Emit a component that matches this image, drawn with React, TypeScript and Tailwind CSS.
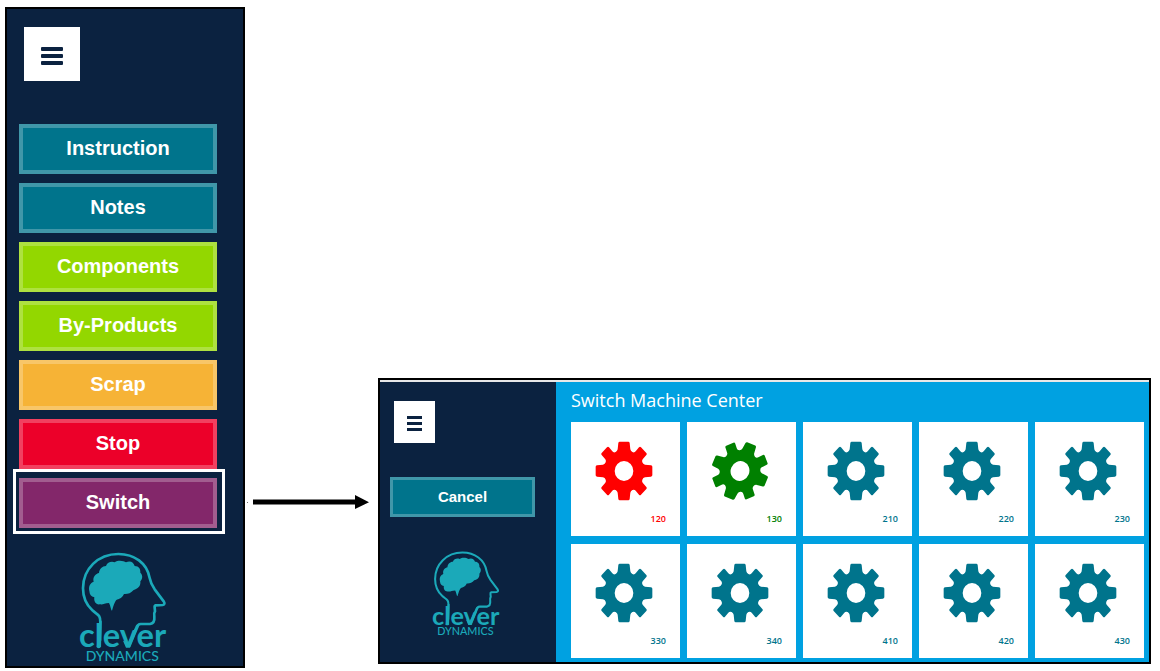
type MachineState = "stopped" | "running" | "idle";

const actions = [
  { label: "Instruction", style: "bg-[#00748c] border-[#4097a9]" },
  { label: "Notes", style: "bg-[#00748c] border-[#4097a9]" },
  { label: "Components", style: "bg-[#93d700] border-[#aee140]" },
  { label: "By-Products", style: "bg-[#93d700] border-[#aee140]" },
  { label: "Scrap", style: "bg-[#f6b336] border-[#f8c668]" },
  { label: "Stop", style: "bg-[#ec0029] border-[#f1405f]" },
  { label: "Switch", style: "bg-[#83276a] border-[#a25d8f]", highlighted: true },
];

const machines: { id: string; state: MachineState }[] = [
  { id: "120", state: "stopped" },
  { id: "130", state: "running" },
  { id: "210", state: "idle" },
  { id: "220", state: "idle" },
  { id: "230", state: "idle" },
  { id: "330", state: "idle" },
  { id: "340", state: "idle" },
  { id: "410", state: "idle" },
  { id: "420", state: "idle" },
  { id: "430", state: "idle" },
];

const stateColor: Record<MachineState, string> = {
  stopped: "text-[#ff0000]",
  running: "text-[#008000]",
  idle: "text-[#00748c]",
};

function Gear({ turned }: { turned: boolean }) {
  return (
    <svg viewBox="-90 -90 180 180" className="h-[60px] w-[60px]" fill="currentColor" aria-hidden="true">
      <path
        transform={turned ? "rotate(22.5)" : undefined}
        fillRule="evenodd"
        d="M-13-88H13Q16-88 17-84L19-65Q20-60 25-57Q31-54 35-59L45-71Q48-74 51-71L67-54Q70-51 67-48L56-35Q53-31 55-26Q57-20 63-19L81-17Q85-16 85-13V13Q85 16 81 17L63 19Q57 20 55 26Q53 31 56 35L67 48Q70 51 67 54L51 71Q48 74 45 71L35 59Q31 54 25 57Q20 60 19 65L17 84Q16 88 13 88H-13Q-16 88-17 84L-19 65Q-20 60-25 57Q-31 54-35 59L-45 71Q-48 74-51 71L-67 54Q-70 51-67 48L-56 35Q-53 31-55 26Q-57 20-63 19L-81 17Q-85 16-85 13V-13Q-85-16-81-17L-63-19Q-57-20-55-26Q-53-31-56-35L-67-48Q-70-51-67-54L-51-71Q-48-74-45-71L-35-59Q-31-54-25-57Q-20-60-19-65L-17-84Q-16-88-13-88ZM-28 0A28 30 0 1 0 28 0A28 30 0 1 0-28 0Z"
      />
    </svg>
  );
}

function Logo({ className }: { className: string }) {
  return (
    <svg
      viewBox="58 34 264 330"
      className={`overflow-visible ${className}`}
      role="img"
      aria-label="Clever Dynamics"
      fill="#1ba9b9"
    >
      <path
        d="M121 300L122 245C123 222 113 222 98 209C77 190 70 166 70 143C70 85 115 40 176 40C224 40 262 67 270 112C273 128 278 136 285 146L312 182Q318 191 309 193L288 194Q284 195 285 201L286 212Q282 218 284 228Q286 248 271 250L243 250Q234 250 230 261L218 290"
        fill="none"
        stroke="#1ba9b9"
        strokeWidth="8"
        strokeLinejoin="round"
      />
      <path d="M119 240L126 240L124 318Q118 326 111 320Z" />
      <path d="M232 252L239 255L211 321H199L190 300L205 305Z" />
      <path d="M89 151C86 136 92 127 102 123C98 108 109 99 118 97C119 85 128 76 139 76C143 65 155 61 165 65C177 57 192 61 199 65C213 59 222 66 225 76C238 76 243 86 242 96C251 104 248 116 242 122C244 137 234 145 222 148C214 158 202 161 193 160C188 172 177 175 170 178C165 185 163 190 157 210C153 207 153 196 148 187C134 187 130 193 121 191C108 193 102 182 104 170C94 168 90 162 89 151Z" />
      <text x="58" y="320" fontSize="98" fontFamily="Lato, sans-serif" fontWeight="700">
        clever
      </text>
      <text x="78" y="362" fontSize="42" fontFamily="Lato, sans-serif" fontWeight="500">
        DYNAMICS
      </text>
    </svg>
  );
}

export default function App() {
  return (
    <main className="flex items-end bg-white pt-[7px] pr-[9px] pb-[3px] pl-[5px] font-['Liberation_Sans',Arial,sans-serif]">
      <aside className="w-60 shrink-0 border-2 border-black bg-[#0b2240] pt-[18px] pr-[26px] pb-1 pl-3">
        <button
          type="button"
          aria-label="Menu"
          className="ml-[5px] flex h-[54px] w-14 flex-col items-center justify-center gap-[3px] bg-white pt-[3px]"
        >
          <span className="h-1 w-[22px] rounded-[1px] bg-[#0b2240]" />
          <span className="h-1 w-[22px] rounded-[1px] bg-[#0b2240]" />
          <span className="h-1 w-[22px] rounded-[1px] bg-[#0b2240]" />
        </button>
        <nav className="mt-[43px] flex flex-col gap-[9px]">
          {actions.map((action) => (
            <div key={action.label} className="relative">
              <button
                type="button"
                className={`h-[50px] w-full border-4 text-xl font-bold text-white ${action.style}`}
              >
                <span className="block pb-0.5">{action.label}</span>
              </button>
              {action.highlighted && (
                <span className="pointer-events-none absolute -top-[9px] -right-2 -bottom-1.5 -left-1.5 border-[3px] border-white bg-transparent" />
              )}
            </div>
          ))}
        </nav>
        <Logo className="mt-6 ml-[60px] h-[110px] w-[88px]" />
      </aside>

      <svg viewBox="0 0 124 14" className="mb-[159px] ml-0.5 h-3.5 w-[124px] shrink-0" aria-hidden="true">
        <rect x="0" y="7" width="1" height="1" fill="#777" />
        <path d="M6 4.5H108V0L122 7.3L108 14V9.5H6Z" fill="#000" />
      </svg>

      <section className="mb-1 ml-[7px] flex min-w-0 flex-1 border-2 border-black bg-[#e8e8e8] pt-0.5">
        <aside className="w-44 shrink-0 bg-[#0b2240] pt-[19px] pr-[21px] pl-2.5">
          <button
            type="button"
            aria-label="Menu"
            className="ml-1 flex h-[42px] w-[41px] flex-col items-center justify-center gap-[3px] bg-white pt-[3px]"
          >
            <span className="h-[3px] w-[15px] bg-[#0b2240]" />
            <span className="h-[3px] w-[15px] bg-[#0b2240]" />
            <span className="h-[3px] w-[15px] bg-[#0b2240]" />
          </button>
          <button
            type="button"
            className="mt-[34px] h-10 w-full border-[3px] border-[#4097a9] bg-[#00748c] text-[15px] font-bold text-white"
          >
            Cancel
          </button>
          <Logo className="mt-[34px] ml-[42px] h-[85px] w-[68px]" />
        </aside>
        <div className="min-w-0 flex-1 bg-[#00a1e1] pr-[5px] pb-1 pl-[15px] font-['Open_Sans','Noto_Sans',sans-serif]">
          <h1 className="flex h-10 items-center pb-1 text-lg font-normal text-white">Switch Machine Center</h1>
          <div className="grid grid-cols-5 gap-x-[7px] gap-y-2">
            {machines.map((machine) => (
              <button
                key={machine.id}
                type="button"
                className={`flex h-[114px] flex-col items-center bg-white pt-[19px] pr-[3px] ${stateColor[machine.state]}`}
              >
                <Gear turned={machine.state === "running"} />
                <span className="mt-3 w-full pr-[11px] text-right text-[9px] leading-3 font-semibold">{machine.id}</span>
              </button>
            ))}
          </div>
        </div>
      </section>
    </main>
  );
}
